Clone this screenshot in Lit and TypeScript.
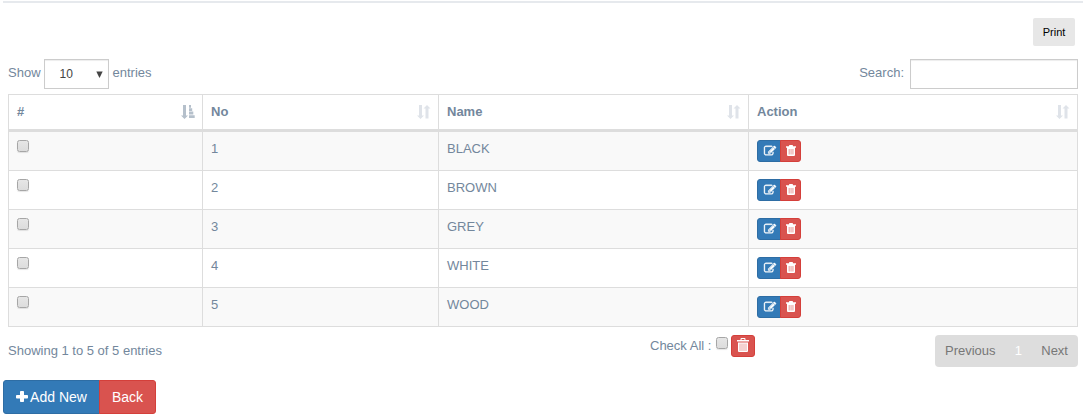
import { LitElement, html, css, svg } from "lit";
import { customElement } from "lit/decorators.js";

const EDIT = "M888 1184l116-116-152-152-116 116v56h96v96h56zm440-720q-16-16-33 1l-350 350q-17 17-1 33t33-1l350-350q17-17 1-33zm80 594v190q0 119-84.5 203.5t-203.5 84.5h-832q-119 0-203.5-84.5t-84.5-203.5v-832q0-119 84.5-203.5t203.5-84.5h832q63 0 117 25 15 7 18 23 3 17-9 29l-49 49q-14 14-32 8-23-6-45-6h-832q-66 0-113 47t-47 113v832q0 66 47 113t113 47h832q66 0 113-47t47-113v-126q0-13 9-22l64-64q15-15 35-7t20 29zm-96-738l288 288-672 672h-288v-288zm444 132l-92 92-288-288 92-92q28-28 68-28t68 28l152 152q28 28 28 68t-28 68z";

const editIcon = html`<svg class="icon edit-icon" width="12" height="12" viewBox="0 0 1792 1792"><path d=${EDIT} /></svg>`;

const trashIcon = html`<svg class="icon small-trash" width="10" height="11" viewBox="0 0 10 11">
  <path fill-rule="evenodd" d="M3 1.200V.8Q3 0 3.800 0h2.400Q7 0 7 .8v.4h3v1.600H9V10q0 1-1 1H2Q1 11 1 10V2.800H0V1.200z" />
  <path class="slat" d="M2.700 4h.9v5.600h-.9zM4.600 4h.9v5.600h-.9zM6.500 4h.9v5.600h-.9z" /></svg>`;

const bigTrashIcon = html`<svg class="icon big-trash" width="12" height="14" viewBox="0 0 12 14">
  <path fill-rule="evenodd" d="M3.5 2V1q0-1 1-1h3q1 0 1 1v1H12v1.6H0V2zM4.6 2h2.8V1H4.6z" />
  <path d="M1 4.5h10V13q0 1-1 1H2q-1 0-1-1z" />
  <path class="slat" d="M2.600 5.500h.8V13h-.8zM4.600 5.500h.8V13h-.8zM6.600 5.500h.8V13h-.8zM8.600 5.500h.8V13h-.8z" /></svg>`;

const plusIcon = html`<svg class="icon" width="12" height="12" viewBox="0 0 12 12">
  <rect x="4" y="0" width="4" height="11" rx=".8" /><rect x="0" y="4" width="12" height="3.500" rx=".8" /></svg>`;

const sortIcon = (active: boolean) => html`<svg class=${active ? "sort active" : "sort"} width="14" height="14" viewBox="0 0 14 14">
  <path d="M2 0h3v10.500h2L3.500 14 0 10.500h2z" />
  ${active
    ? svg`<path d="M8 0h2v2.800H8zM8 3.200h3.200v2.900H8zM8 6.600h4.300v3H8zM8 10.200h5.700v2.800H8z" />`
    : svg`<path d="M8.500 13.500h3V3.500h2L10 0 6.500 3.500h2z" />`}
</svg>`;

@customElement("app-root")
export class AppRoot extends LitElement {
  static styles = css`
    :host { display: block; height: 420px; overflow: hidden; background: #fff; color: #73879c;
      font: 13px/18px "Liberation Sans", Arial, sans-serif; box-sizing: border-box; padding: 1px 2px 0 3px; }
    * { box-sizing: border-box; }
    .rule { height: 2px; background: #e6e9ed; }
    .print-row { display: flex; justify-content: flex-end; padding: 15px 8px 0 0; }
    .print { width: 42px; height: 28px; border-radius: 2px; background: #e7e7e7; color: #000;
      font-size: 11px; line-height: 28px; text-align: center; }
    .controls { display: flex; justify-content: space-between; padding: 13px 5px 0; height: 48px; }
    .control { display: flex; }
    .control span { padding-top: 5px; }
    .select { width: 65px; height: 30px; border: 1px solid #ccc; margin: 0 4px 0 3px; padding: 0 5px 0 15px;
      display: flex; justify-content: space-between; align-items: center; color: #444; font-size: 12px;
      box-shadow: inset 0 1px 1px rgba(0,0,0,.075); }
    .select svg { fill: #444; }
    .search { width: 168px; height: 30px; border: 1px solid #ccc; margin-left: 6px; box-shadow: inset 0 1px 1px rgba(0,0,0,.075); }
    .table { margin: 0 5px; border: 1px solid #ddd; border-left: 0; }
    .row { display: grid; grid-template-columns: 194px 236px 310px 1fr; height: 39px; border-top: 1px solid #ddd; }
    .row.head { height: 37px; border-top: 0; border-bottom: 3px solid #ddd; font-weight: 700; }
    .row.first { height: 38px; border-top: 0; }
    .row.odd { background: #f9f9f9; }
    .cell { border-left: 1px solid #ddd; padding: 8px 8px 0; }
    .head .cell { display: flex; justify-content: space-between; padding-right: 7px; }
    .sort { fill: #dfe3e9; margin-top: 2px; }
    .sort.active { fill: #b5c0cb; }
    .box { width: 12px; height: 12px; border: 1px solid #a6a6a6; border-radius: 2.5px; background: linear-gradient(#e6e6e6, #dcdcdc); box-shadow: 0 1px 1px rgba(0,0,0,.1); }
    .icon { fill: #fff; display: block; flex: none; }
    .edit-icon { stroke: #fff; stroke-width: 60px; overflow: visible; }
    .slat { fill: #e58f8c; }
    .group { display: flex; }
    .btn { display: flex; align-items: center; justify-content: center; color: #fff; border: 1px solid; height: 22px; }
    .blue { background: #337ab7; border-color: #2e6da4; border-radius: 3px 0 0 3px; }
    .red { background: #d9534f; border-color: #d43f3a; border-radius: 0 3px 3px 0; }
    .edit { width: 24px; }
    .edit .icon { margin-left: 1px; }
    .del { width: 21px; margin-left: -1px; }
    .del .icon { margin: 0 0 1px 1px; }
    .footer { display: flex; height: 53px; padding: 8px 5px 0; }
    .info { width: 642px; padding-top: 7px; }
    .check { display: flex; width: 285px; }
    .check span { padding-top: 2px; margin-right: 5px; }
    .check .box { margin: 2px 3px 0 0; }
    .all { width: 24px; border-radius: 3px; }
    .all .icon { margin-bottom: 2px; }
    .pager { width: 143px; height: 32px; border-radius: 4px; background: #ddd; color: #777; display: flex; justify-content: space-between; padding: 7px 10px; }
    .pager .current { color: #fff; }
    .big { height: 34px; font-size: 14px; }
    .add { width: 97px; gap: 2px; }
    .back { width: 57px; margin-left: -1px; }
  `;

  private row(name: string, i: number) {
    return html`<div class="row ${i === 0 ? "first" : ""} ${i % 2 ? "" : "odd"}">
      <div class="cell"><div class="box"></div></div>
      <div class="cell">${i + 1}</div>
      <div class="cell">${name}</div>
      <div class="cell"><div class="group"><div class="btn blue edit">${editIcon}</div><div class="btn red del">${trashIcon}</div></div></div>
    </div>`;
  }

  render() {
    return html`
      <div class="rule"></div>
      <div class="print-row"><div class="print">Print</div></div>
      <div class="controls">
        <div class="control"><span>Show</span>
          <div class="select">10<svg width="7" height="7" viewBox="0 0 7 7"><path d="M.3.500h6.400L3.500 7z" /></svg></div>
          <span>entries</span></div>
        <div class="control"><span>Search:</span><div class="search"></div></div>
      </div>
      <div class="table">
        <div class="row head">${["#", "No", "Name", "Action"].map((t, i) => html`<div class="cell">${t}${sortIcon(i === 0)}</div>`)}</div>
        ${["BLACK", "BROWN", "GREY", "WHITE", "WOOD"].map((n, i) => this.row(n, i))}
      </div>
      <div class="footer">
        <div class="info">Showing 1 to 5 of 5 entries</div>
        <div class="check"><span>Check All :</span><div class="box"></div><div class="btn red all">${bigTrashIcon}</div></div>
        <div class="pager"><span>Previous</span><span class="current">1</span><span>Next</span></div>
      </div>
      <div class="group"><div class="btn blue big add">${plusIcon}Add New</div><div class="btn red big back">Back</div></div>`;
  }
}
